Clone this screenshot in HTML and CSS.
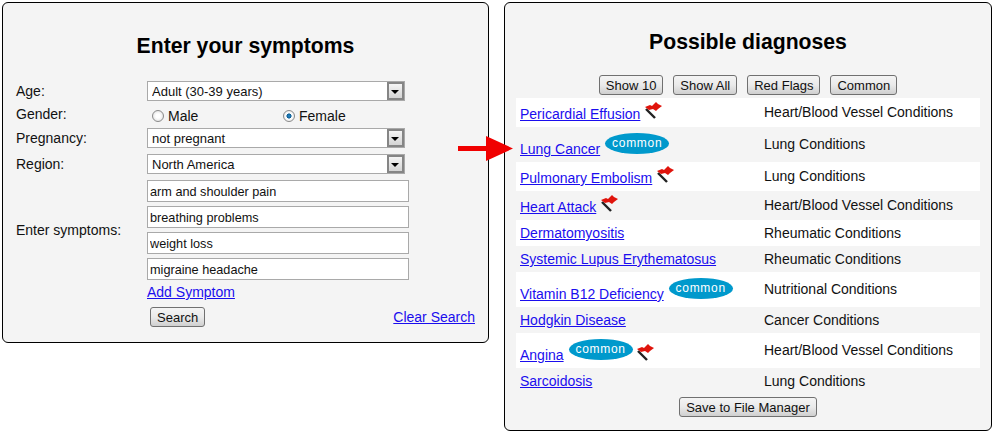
FILE: index.html
```html
<!DOCTYPE html>
<html lang="en">
<head>
  <meta charset="UTF-8">
  <meta name="viewport" content="width=device-width, initial-scale=1.0">
  <title>Symptom Checker</title>
  <link rel="stylesheet" href="styles.css">
</head>
<body>
  <svg width="0" height="0" class="defs">
    <symbol id="flag" viewBox="0 0 20 20">
      <path d="M3 8 L12 17" stroke="#222" stroke-width="2.4" fill="none"/>
      <path d="M2 6 L7 4 L9 5 L13 1 L15 3 L19 5 L15 8 L13 10 L10 8 L6 9 Z" fill="#e0140c"/>
    </symbol>
  </svg>

  <div class="page">
    <section class="panel panel-search">
      <h2 class="title">Enter your symptoms</h2>
      <form class="form">
        <label class="label">Age:</label>
        <div class="select-box">
          <select><option>Adult (30-39 years)</option></select>
        </div>

        <label class="label label-gender">Gender:</label>
        <div class="radios">
          <label class="radio"><input type="radio" name="gender"> Male</label>
          <label class="radio"><input type="radio" name="gender" checked> Female</label>
        </div>

        <label class="label">Pregnancy:</label>
        <div class="select-box">
          <select><option>not pregnant</option></select>
        </div>

        <label class="label">Region:</label>
        <div class="select-box">
          <select><option>North America</option></select>
        </div>

        <label class="label label-symptoms">Enter symptoms:</label>
        <div class="symptoms">
          <input type="text" value="arm and shoulder pain">
          <input type="text" value="breathing problems">
          <input type="text" value="weight loss">
          <input type="text" value="migraine headache">
        </div>

        <div class="add-row"><a href="#">Add Symptom</a></div>
        <div class="search-row">
          <button type="button" class="button">Search</button>
          <a href="#">Clear Search</a>
        </div>
      </form>
    </section>

    <section class="panel panel-results">
      <h2 class="title">Possible diagnoses</h2>
      <div class="filters">
        <button type="button" class="button">Show 10</button>
        <button type="button" class="button">Show All</button>
        <button type="button" class="button">Red Flags</button>
        <button type="button" class="button">Common</button>
      </div>
      <div class="results">
        <div class="row row-flag">
          <div class="name"><a href="#">Pericardial Effusion</a><svg class="flag"><use href="#flag"/></svg></div>
          <div class="category">Heart/Blood Vessel Conditions</div>
        </div>
        <div class="row row-common">
          <div class="name"><a href="#">Lung Cancer</a><span class="pill">common</span></div>
          <div class="category">Lung Conditions</div>
        </div>
        <div class="row row-flag">
          <div class="name"><a href="#">Pulmonary Embolism</a><svg class="flag"><use href="#flag"/></svg></div>
          <div class="category">Lung Conditions</div>
        </div>
        <div class="row row-flag">
          <div class="name"><a href="#">Heart Attack</a><svg class="flag"><use href="#flag"/></svg></div>
          <div class="category">Heart/Blood Vessel Conditions</div>
        </div>
        <div class="row">
          <div class="name"><a href="#">Dermatomyositis</a></div>
          <div class="category">Rheumatic Conditions</div>
        </div>
        <div class="row">
          <div class="name"><a href="#">Systemic Lupus Erythematosus</a></div>
          <div class="category">Rheumatic Conditions</div>
        </div>
        <div class="row row-common">
          <div class="name"><a href="#">Vitamin B12 Deficiency</a><span class="pill">common</span></div>
          <div class="category">Nutritional Conditions</div>
        </div>
        <div class="row">
          <div class="name"><a href="#">Hodgkin Disease</a></div>
          <div class="category">Cancer Conditions</div>
        </div>
        <div class="row row-common">
          <div class="name"><a href="#">Angina</a><span class="pill">common</span><svg class="flag flag-low"><use href="#flag"/></svg></div>
          <div class="category">Heart/Blood Vessel Conditions</div>
        </div>
        <div class="row">
          <div class="name"><a href="#">Sarcoidosis</a></div>
          <div class="category">Lung Conditions</div>
        </div>
      </div>
      <div class="save-row">
        <button type="button" class="button">Save to File Manager</button>
      </div>
    </section>
  </div>

  <svg class="arrow" width="56" height="26" viewBox="0 0 56 26">
    <path d="M0 10 H28 V0 L55 12.5 L28 25 V15 H0 Z" fill="#f00000"/>
  </svg>
</body>
</html>
```

FILE: styles.css
```css
* {
  margin: 0;
  padding: 0;
  box-sizing: border-box;
}

body {
  font-family: "Liberation Sans", Arial, sans-serif;
  font-size: 14px;
  color: #111;
  background-color: #fff;
  position: relative;
}

a {
  color: #1a0dee;
}

.defs {
  position: absolute;
}

.page {
  display: flex;
  align-items: flex-start;
  gap: 15px;
  padding: 2px;
}

.panel {
  border: 1px solid #000;
  border-radius: 6px;
  background-color: #f4f4f4;
}

.panel-search {
  width: 487px;
  height: 341px;
  padding: 31px 13px 0;
}

.panel-results {
  width: 488px;
  height: 429px;
  padding: 27px 11px 0;
}

.title {
  font-size: 21.2px;
  line-height: 24px;
  font-weight: bold;
  color: #000;
  text-align: center;
}

.form {
  display: grid;
  grid-template-columns: 131px 1fr;
  grid-template-rows: 20px 27px 26px 26px 100px 27px 20px;
  margin-top: 23px;
}

.label {
  line-height: 20px;
}

.label-gender {
  margin-top: 3px;
}

.label-symptoms {
  align-self: center;
}

.select-box {
  position: relative;
  width: 258px;
  height: 20px;
}

.select-box select {
  appearance: none;
  width: 100%;
  height: 20px;
  padding: 0 4px;
  border: 1px solid #a9a9a9;
  border-radius: 0;
  background-color: #fff;
  font: inherit;
  font-size: 13px;
  color: #111;
}

.select-box::after {
  content: "";
  box-sizing: border-box;
  position: absolute;
  top: 1px;
  right: 1px;
  width: 17px;
  height: 18px;
  border: 2px solid #858585;
  background: linear-gradient(#f4f4f4, #d4d4d4);
}

.select-box::before {
  content: "";
  position: absolute;
  z-index: 1;
  top: 9px;
  right: 6px;
  border-style: solid;
  border-width: 4px 4px 0;
  border-color: #000 transparent transparent;
}

.radios {
  display: flex;
  padding: 7px 0 0 5px;
}

.radio {
  display: flex;
  align-items: center;
  gap: 4px;
  width: 131px;
  height: 16px;
}

.radio input {
  appearance: none;
  width: 12px;
  height: 12px;
  border: 1px solid #8a8a8a;
  border-radius: 50%;
  background: radial-gradient(circle at 50% 50%, #fff 30%, #d8d8d8 100%);
}

.radio input:checked {
  background: radial-gradient(circle, #2a8cc8 0, #0d5c94 32%, #fff 40%, #dcdcdc 100%);
}

.symptoms {
  display: flex;
  flex-direction: column;
  gap: 4px;
}

.symptoms input {
  width: 262px;
  height: 22px;
  padding: 2px 2px 0;
  border: 1px solid #a9a9a9;
  background-color: #fff;
  font: inherit;
  font-size: 12.7px;
  color: #111;
}

.add-row {
  grid-column: 2;
  padding-top: 4px;
}

.search-row {
  grid-column: 2;
  display: flex;
  justify-content: space-between;
  align-items: center;
  width: 328px;
  padding-left: 3px;
}

.button {
  height: 20px;
  padding: 0 6px;
  border: 1px solid #707070;
  border-radius: 3px;
  background: linear-gradient(#f4f4f4, #eaeaea 50%, #cfcfcf);
  font: inherit;
  font-size: 13px;
  color: #111;
}

.filters {
  display: flex;
  justify-content: center;
  gap: 10px;
  margin-top: 21px;
}

.results {
  margin-top: 3px;
}

.row {
  display: grid;
  grid-template-columns: 244px 1fr;
  align-items: center;
  height: 26px;
  padding-left: 4px;
}

.row:nth-child(odd) {
  background-color: #fff;
}

.row-flag {
  height: 29px;
  padding-bottom: 2px;
}

.row-common {
  height: 35px;
  padding-bottom: 2px;
}

.name {
  display: flex;
  align-items: flex-end;
}

.row-common .name a {
  margin-bottom: -2px;
}

.flag {
  width: 20px;
  height: 20px;
  margin-left: 3px;
  margin-bottom: 1px;
}

.flag-low {
  margin-left: 2px;
  margin-bottom: -2px;
}

.pill {
  width: 64px;
  height: 21px;
  margin-left: 5px;
  margin-bottom: 1px;
  border-radius: 50%;
  background-color: #0099cc;
  color: #fff;
  font-size: 12px;
  line-height: 20px;
  letter-spacing: 0.7px;
  text-align: center;
}

.save-row {
  display: flex;
  justify-content: center;
  margin-top: 3px;
}

.arrow {
  position: absolute;
  left: 458px;
  top: 136px;
}
```
